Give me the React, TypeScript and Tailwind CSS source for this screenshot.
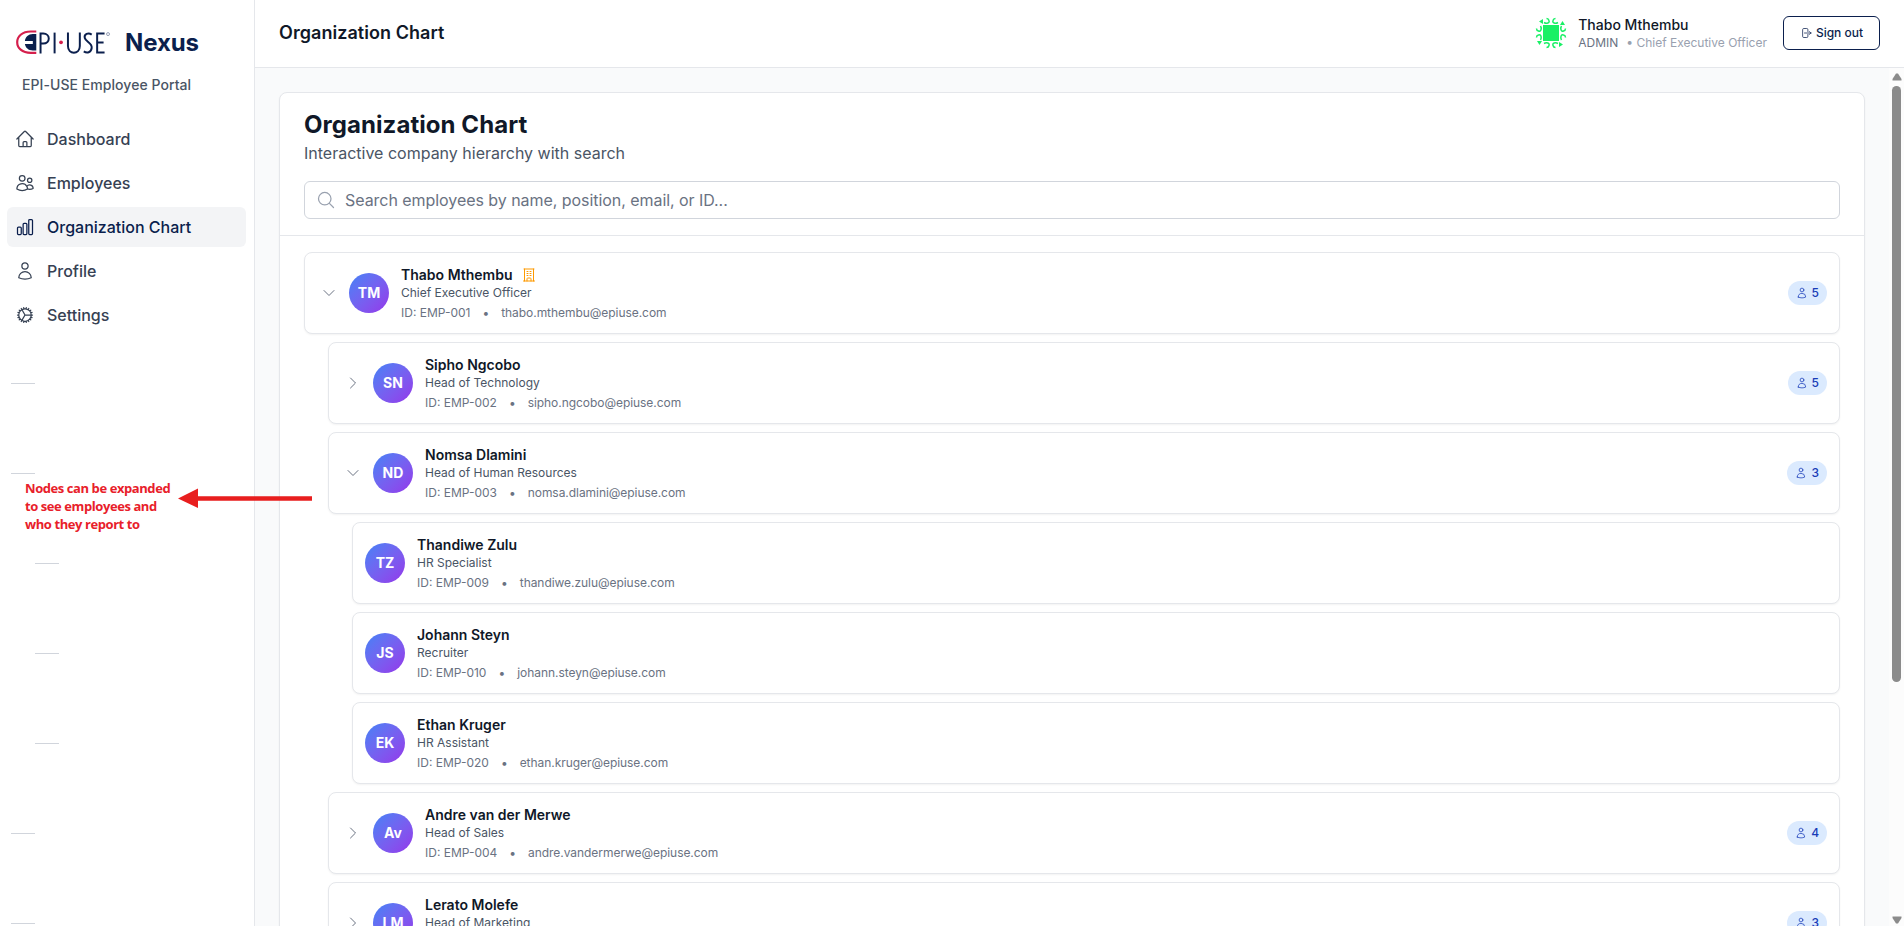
import type { ComponentType } from "react";
import {
  HiOutlineHome,
  HiOutlineUsers,
  HiOutlineChartBar,
  HiOutlineUser,
  HiOutlineMagnifyingGlass,
  HiOutlineChevronDown,
  HiOutlineChevronRight,
  HiOutlineBuildingOffice,
  HiOutlineArrowRightOnRectangle,
} from "react-icons/hi2";

type NavItem = { label: string; icon: ComponentType<{ className?: string }>; active?: boolean };

function CogIcon({ className }: { className?: string }) {
  return (
    <svg className={className} viewBox="0 0 24 24" fill="none" stroke="currentColor" strokeWidth="1.5" strokeLinecap="round" strokeLinejoin="round">
      <path d="M4.5 12a7.5 7.5 0 0 0 15 0m-15 0a7.5 7.5 0 1 1 15 0m-15 0H3m16.5 0H21m-1.5 0H12m-8.457 3.077 1.41-.513m14.095-5.13 1.41-.513M5.106 17.785l1.15-.964m11.49-9.642 1.149-.964M7.501 19.795l.75-1.3m7.5-12.99.75-1.3m-6.063 16.658.26-1.477m2.605-14.772.26-1.477m0 17.726-.26-1.477M10.698 4.614l-.26-1.477M16.5 19.794l-.75-1.299M7.5 4.205 12 12m6.894 5.785-1.149-.964M6.256 7.178l-1.15-.964m15.352 8.864-1.41-.513M4.954 9.435l-1.41-.514M12.002 12l-3.75 6.495" />
    </svg>
  );
}

const NAV: NavItem[] = [
  { label: "Dashboard", icon: HiOutlineHome },
  { label: "Employees", icon: HiOutlineUsers },
  { label: "Organization Chart", icon: HiOutlineChartBar, active: true },
  { label: "Profile", icon: HiOutlineUser },
  { label: "Settings", icon: CogIcon },
];

type Person = {
  name: string;
  role: string;
  id: string;
  email: string;
  initials: string;
  level: 0 | 1 | 2;
  reports?: number;
  open?: boolean;
};

const PEOPLE: Person[] = [
  { name: "Thabo Mthembu", role: "Chief Executive Officer", id: "EMP-001", email: "thabo.mthembu@epiuse.com", initials: "TM", level: 0, reports: 5, open: true },
  { name: "Sipho Ngcobo", role: "Head of Technology", id: "EMP-002", email: "sipho.ngcobo@epiuse.com", initials: "SN", level: 1, reports: 5 },
  { name: "Nomsa Dlamini", role: "Head of Human Resources", id: "EMP-003", email: "nomsa.dlamini@epiuse.com", initials: "ND", level: 1, reports: 3, open: true },
  { name: "Thandiwe Zulu", role: "HR Specialist", id: "EMP-009", email: "thandiwe.zulu@epiuse.com", initials: "TZ", level: 2 },
  { name: "Johann Steyn", role: "Recruiter", id: "EMP-010", email: "johann.steyn@epiuse.com", initials: "JS", level: 2 },
  { name: "Ethan Kruger", role: "HR Assistant", id: "EMP-020", email: "ethan.kruger@epiuse.com", initials: "EK", level: 2 },
  { name: "Andre van der Merwe", role: "Head of Sales", id: "EMP-004", email: "andre.vandermerwe@epiuse.com", initials: "Av", level: 1, reports: 4 },
  { name: "Lerato Molefe", role: "Head of Marketing", id: "EMP-005", email: "lerato.molefe@epiuse.com", initials: "LM", level: 1, reports: 3 },
];

const INDENT = { 0: "", 1: "ml-6", 2: "ml-12" };

function Logo() {
  return (
    <svg className="h-[25px] w-[95px] shrink-0" viewBox="0 0 96 25" fill="none">
      <path d="M20.500 1.400H15C6 1.400 1.200 6.500 1.200 12.200S6 23 15 23H20.500" stroke="#d51f4c" strokeWidth="2.200" />
      <path d="M20.500 4V20.500H17C12.500 20.500 9.500 17.800 9 14H17V11H9C9.500 7 12.500 4 17 4Z" fill="#0b1f4d" />
      <g stroke="#0b1f4d" strokeWidth="2">
        <path d="M24.800 23.500V3.500H27.500C35 3.500 35 13.500 27.500 13.500H24.800" />
        <path d="M39 2.500V23.500" />
        <path d="M52.500 2.500V16C52.500 25 64.500 25 64.500 16V2.500" />
        <path d="M76.500 4.500C73 2 68.500 4 69.500 8C70.500 12 77 13 76.500 18C76 23 71.500 23.500 68.500 21.500" />
        <path d="M89.500 3.400H82V22.600H89.500M82 12.500H88.500" />
      </g>
      <circle cx="45.500" cy="12.300" r="1.900" fill="#d51f4c" />
      <circle cx="93" cy="4" r="1.500" stroke="#8a94ad" strokeWidth="0.900" />
    </svg>
  );
}

function Identicon() {
  return (
    <svg className="size-8 shrink-0" viewBox="-16 -16 32 32" fill="none">
      <rect x="-8" y="-8" width="16" height="16" fill="#19f065" />
      {[0, 90, 180, 270].map((angle) => (
        <g key={angle} transform={`rotate(${angle})`}>
          <path
            d="M-7 -10.500C-4.500 -9 -1 -10 -2 -12.500C-2.300 -13.800 -3.300 -14.500 -4.500 -14.500M7 -10.500C4.500 -9 1 -10 2 -12.500C2.300 -13.800 3.300 -14.500 4.500 -14.500"
            stroke="#19f065"
            strokeWidth="1.500"
          />
          <path d="M-12 -11.500L-8 -14V-9Z" fill="#19f065" />
        </g>
      ))}
    </svg>
  );
}

function Sidebar() {
  return (
    <aside className="flex w-[255px] shrink-0 flex-col border-r border-gray-200 bg-white">
      <div className="flex h-[84px] items-center gap-[14px] pl-4">
        <Logo />
        <span className="pt-[2px] text-2xl font-bold tracking-[-0.1px] text-[#0b1f4d]">Nexus</span>
      </div>
      <p className="-mt-[9px] pl-[22px] text-sm leading-5 font-medium tracking-[0.06px] text-gray-600">EPI-USE Employee Portal</p>
      <nav className="mt-[24px] flex flex-col gap-1 pr-2 pl-[7px]">
        {NAV.map(({ label, icon: Icon, active }) => (
          <a
            key={label}
            className={`flex h-10 items-center gap-3 rounded-md px-2 text-base font-medium ${active ? "bg-gray-100 text-[#0b1f4d]" : "text-gray-700"}`}
          >
            <Icon className="size-5" />
            {label}
          </a>
        ))}
      </nav>
    </aside>
  );
}

function Header() {
  return (
    <header className="flex h-[68px] shrink-0 items-center justify-between border-b border-gray-200 bg-white px-6 pb-px">
      <h1 className="text-lg font-semibold tracking-[0.05px] text-gray-900">Organization Chart</h1>
      <div className="flex items-center gap-4">
        <div className="flex items-center gap-[11px]">
          <Identicon />
          <div className="pt-px">
            <div className="text-sm leading-[18px] font-medium text-gray-900">Thabo Mthembu</div>
            <div className="flex gap-2 text-xs leading-[17px] text-gray-500">
              ADMIN <span className="text-gray-400">• Chief Executive Officer</span>
            </div>
          </div>
        </div>
        <button className="flex h-[34px] w-[97px] items-center justify-center gap-1 rounded-md border border-[#0b1f4d] text-xs font-medium text-[#0b1f4d]">
          <HiOutlineArrowRightOnRectangle className="size-3" />
          Sign out
        </button>
      </div>
    </header>
  );
}

function PersonCard({ person }: { person: Person }) {
  const Chevron = person.open ? HiOutlineChevronDown : HiOutlineChevronRight;
  return (
    <div className={`flex h-[82px] items-center gap-3 rounded-lg border border-gray-200 bg-white px-3 shadow-xs ${INDENT[person.level]}`}>
      {person.reports && (
        <button className="-mr-1 flex size-6 items-center justify-center text-gray-500">
          <Chevron className="size-4" />
        </button>
      )}
      <div className="flex size-10 shrink-0 items-center justify-center rounded-full bg-linear-to-br from-[#3b82f6] to-[#9333ea] text-sm font-bold text-white">
        {person.initials}
      </div>
      <div className="min-w-0 flex-1">
        <div className="flex items-center gap-2 text-sm leading-5 font-semibold text-gray-900">
          {person.name}
          {person.level === 0 && <HiOutlineBuildingOffice className="size-4 text-amber-500" />}
        </div>
        <div className="text-xs leading-4 text-gray-600">{person.role}</div>
        <div className="mt-1 flex gap-3 text-xs leading-4 text-gray-500">
          <span>ID: {person.id}</span>
          <span>•</span>
          <span className="tracking-[-0.05px]">{person.email}</span>
        </div>
      </div>
      {person.reports && (
        <span className="flex h-6 items-center gap-1 rounded-full bg-blue-100 px-2 text-xs font-medium text-blue-800">
          <HiOutlineUser className="size-3" />
          {person.reports}
        </span>
      )}
    </div>
  );
}

export default function App() {
  return (
    <div className="relative flex h-[926px] overflow-hidden bg-gray-50 font-['Inter',sans-serif]">
      <Sidebar />
      <div className="flex min-w-0 flex-1 flex-col">
        <Header />
        <div className="flex min-h-0 flex-1">
          <main className="min-w-0 flex-1 overflow-hidden px-6 pt-6">
            <section className="rounded-lg border border-gray-200 bg-white shadow-xs">
              <div className="border-b border-gray-200 px-6 pt-4 pb-4">
                <h2 className="text-2xl leading-8 font-bold tracking-[0.06px] text-gray-900">Organization Chart</h2>
                <p className="text-base text-gray-600">Interactive company hierarchy with search</p>
                <div className="mt-4 flex h-[38px] items-center gap-[9px] rounded-md border border-gray-300 pr-3 pl-[11px] text-base tracking-[-0.05px] text-gray-500">
                  <HiOutlineMagnifyingGlass className="size-5 text-gray-400" />
                  Search employees by name, position, email, or ID...
                </div>
              </div>
              <div className="flex flex-col gap-2 px-6 py-4">
                {PEOPLE.map((person) => (
                  <PersonCard key={person.id} person={person} />
                ))}
              </div>
            </section>
          </main>
          <div className="flex w-[15px] shrink-0 flex-col items-center bg-[#fcfcfc] pt-[5px] pb-[2px]">
            <svg className="h-[8px] w-[10px]" viewBox="0 0 10 8" fill="#8b8b8b">
              <path d="M4 0.500H6L9.500 6V7.500H0.500V6Z" />
            </svg>
            <div className="mt-[5px] h-[596px] w-[9px] rounded-full bg-[#8b8b8b]" />
            <svg className="mt-auto h-[8px] w-[10px]" viewBox="0 0 10 8" fill="#8b8b8b">
              <path d="M4 7.500H6L9.500 2V0.500H0.500V2Z" />
            </svg>
          </div>
        </div>
      </div>

      <div className="absolute top-[383px] left-[11px] flex flex-col gap-[89px]">
        <i className="h-px w-6 bg-gray-300" />
        <i className="h-px w-6 bg-gray-300" />
        <i className="ml-6 h-px w-6 bg-gray-300" />
        <i className="ml-6 h-px w-6 bg-gray-300" />
        <i className="ml-6 h-px w-6 bg-gray-300" />
        <i className="h-px w-6 bg-gray-300" />
        <i className="h-px w-6 bg-gray-300" />
      </div>
      <p className="absolute top-[479px] left-[25px] font-['Open_Sans',sans-serif] text-[13px] leading-[18px] font-bold tracking-[-0.42px] whitespace-nowrap text-[#e8202a]">
        Nodes can be expanded
        <br />
        to see employees and
        <br />
        who they report to
      </p>
      <svg className="absolute top-[488px] left-[178px] h-[20px] w-[134px]" viewBox="0 0 134 20" fill="#e81e1e">
        <path d="M0 10.500L20 0.500V8.300H134V12.700H20V20Z" />
      </svg>
    </div>
  );
}
